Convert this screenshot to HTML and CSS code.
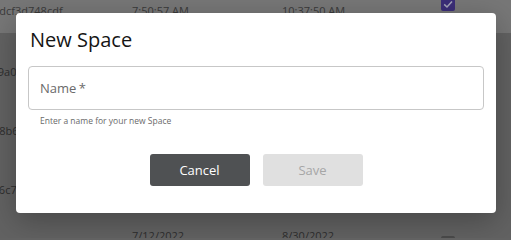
FILE: index.html
```html
<!DOCTYPE html>
<html>
<head>
<meta charset="utf-8">
<link rel="stylesheet" href="styles.css">
</head>
<body>
<div class="page">
  <div class="rows">
    <div class="row row-top">
      <div class="cell c-id"><span class="id">3b4dcf3d748cdf</span></div>
      <div class="cell c-date"><span>7/12/2022</span><span>7:50:57 AM</span></div>
      <div class="cell c-date2"><span>8/30/2022</span><span>10:37:50 AM</span></div>
      <div class="cell c-check"><span class="check on"><svg viewBox="0 0 14 14" width="14" height="14"><path d="M3.2 7.4 L6 10 L11 4.6" fill="none" stroke="#a4a4b8" stroke-width="1.5"/></svg></span></div>
    </div>
    <div class="row">
      <div class="cell c-id"><span class="id">ec69a0b71d2e4</span></div>
      <div class="cell c-date"><span>7/12/2022</span><span>7:51:02 AM</span></div>
      <div class="cell c-date2"><span>8/30/2022</span><span>10:37:50 AM</span></div>
      <div class="cell c-check"></div>
    </div>
    <div class="row">
      <div class="cell c-id"><span class="id">3d28b6f04ae91</span></div>
      <div class="cell c-date"><span>7/12/2022</span><span>7:52:11 AM</span></div>
      <div class="cell c-date2"><span>8/30/2022</span><span>10:37:50 AM</span></div>
      <div class="cell c-check"></div>
    </div>
    <div class="row">
      <div class="cell c-id"><span class="id">0956c7e2b13f8</span></div>
      <div class="cell c-date"><span>7/12/2022</span><span>7:53:40 AM</span></div>
      <div class="cell c-date2"><span>8/30/2022</span><span>10:37:50 AM</span></div>
      <div class="cell c-check"></div>
    </div>
    <div class="row row-last">
      <div class="cell c-id"><span class="id">5a71e9d04bc22</span></div>
      <div class="cell c-date"><span>7/12/2022</span><span>7:54:18 AM</span></div>
      <div class="cell c-date2"><span>8/30/2022</span><span>10:37:50 AM</span></div>
      <div class="cell c-check"><span class="check off"></span></div>
    </div>
  </div>
</div>

<div class="overlay">
  <div class="modal">
    <h1 class="title">New Space</h1>
    <div class="field">
      <div class="input">Name *</div>
      <div class="helper">Enter a name for your new Space</div>
    </div>
    <div class="actions">
      <button class="btn btn-cancel">Cancel</button>
      <button class="btn btn-save" disabled>Save</button>
    </div>
  </div>
</div>
</body>
</html>
```
FILE: styles.css
```css
html, body {
  margin: 0;
  padding: 0;
}
body {
  width: 511px;
  height: 238px;
  overflow: hidden;
  background: #626262;
  font-family: "Open Sans", "Liberation Sans", sans-serif;
  position: relative;
}
.page {
  height: 238px;
  overflow: hidden;
}
.rows {
  display: flex;
  flex-direction: column;
  margin-top: -11px;
}
.row {
  display: flex;
  flex: none;
  box-sizing: border-box;
  height: 59px;
  padding-top: 19px;
  align-items: center;
  color: #2e2e2e;
  font-size: 11px;
}
.row-top {
  height: 44px;
  padding-top: 0;
  background: #777777;
  color: #3a3a3a;
}
.row-last {
  padding-top: 24px;
}
.cell {
  display: flex;
  flex-direction: column;
  line-height: 16px;
  white-space: nowrap;
}
.c-id {
  width: 152px;
  margin-left: -20px;
}
.c-date {
  width: 150px;
  padding-bottom: 16px;
}
.c-date2 {
  width: 159px;
  padding-bottom: 16px;
}
.c-check { width: 20px; }
.check {
  display: block;
  width: 14px;
  height: 14px;
  border-radius: 2px;
  background: #4a4a4a;
}
.check.on {
  background: #3b2e78;
  margin-bottom: 14px;
}
.check.off {
  margin-bottom: 18px;
}
.check svg { display: block; }

.overlay {
  position: absolute;
  inset: 0;
}
.modal {
  position: absolute;
  left: 16px;
  top: 13px;
  width: 480px;
  height: 200px;
  box-sizing: border-box;
  background: #ffffff;
  border-radius: 4px;
  box-shadow: 0 8px 30px rgba(0, 0, 0, 0.28);
  padding: 15px 12px 0 12px;
  display: flex;
  flex-direction: column;
}
.title {
  margin: 0 0 0 2px;
  font-size: 20px;
  line-height: 24px;
  font-weight: 400;
  color: #151515;
}
.field {
  margin-top: 14px;
}
.input {
  height: 44px;
  box-sizing: border-box;
  border: 1px solid #c7c7c7;
  border-radius: 4px;
  padding: 0 11px;
  display: flex;
  align-items: center;
  font-size: 13px;
  color: #6a6a6a;
  word-spacing: -1px;
}
.helper {
  margin-top: 5px;
  padding-left: 12px;
  font-size: 8.5px;
  line-height: 12px;
  color: #6a6a6a;
}
.actions {
  margin-top: 27px;
  display: flex;
  justify-content: center;
  gap: 13px;
}
.btn {
  width: 100px;
  height: 32px;
  border: none;
  border-radius: 3px;
  font-family: inherit;
  font-size: 13px;
}
.btn-cancel {
  background: #4f5153;
  color: #ffffff;
}
.btn-save {
  background: #e0e0e0;
  color: #a6a6a6;
}
```
